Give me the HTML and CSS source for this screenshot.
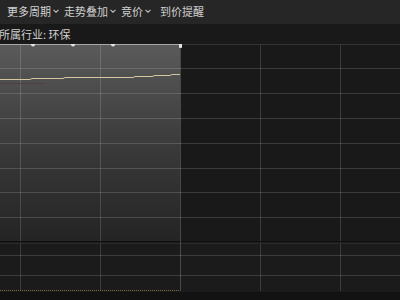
FILE: index.html
```html
<!DOCTYPE html>
<html lang="zh">
<head>
<meta charset="utf-8">
<link rel="stylesheet" href="styles.css">
</head>
<body>
<div class="page">
  <div class="toolbar">
    <span class="item">更多周期<svg class="chev" viewBox="0 0 6 4"><path d="M0.5 0.8 L3 3.2 L5.5 0.8" /></svg></span>
    <span class="item">走势叠加<svg class="chev" viewBox="0 0 6 4"><path d="M0.5 0.8 L3 3.2 L5.5 0.8" /></svg></span>
    <span class="item">竞价<svg class="chev" viewBox="0 0 6 4"><path d="M0.5 0.8 L3 3.2 L5.5 0.8" /></svg></span>
    <span class="item last">到价提醒</span>
  </div>
  <div class="industry">所属行业: 环保</div>
  <svg class="chart" viewBox="0 44 400 256" width="400" height="256">
    <defs>
      <linearGradient id="g" x1="0" y1="0" x2="0" y2="1">
        <stop offset="0" stop-color="#5a5a5a"/>
        <stop offset="0.55" stop-color="#383838"/>
        <stop offset="1" stop-color="#242424"/>
      </linearGradient>
    </defs>
    <rect x="0" y="44" width="400" height="198" fill="#191919"/>
    <rect x="0" y="242" width="400" height="50" fill="#1b1b1b"/>
    <rect x="0" y="292" width="400" height="8" fill="#121212"/>
    <rect x="0" y="45" width="180" height="197" fill="url(#g)"/>
    <g stroke="rgba(255,255,255,0.15)" stroke-width="1">
      <line x1="0" y1="68.5" x2="400" y2="68.5"/>
      <line x1="0" y1="93.5" x2="400" y2="93.5"/>
      <line x1="0" y1="118.5" x2="400" y2="118.5"/>
      <line x1="0" y1="143.5" x2="400" y2="143.5"/>
      <line x1="0" y1="168.5" x2="400" y2="168.5"/>
      <line x1="0" y1="192.5" x2="400" y2="192.5"/>
      <line x1="0" y1="217.5" x2="400" y2="217.5"/>
      <line x1="0" y1="255.5" x2="400" y2="255.5"/>
      <line x1="0" y1="275.5" x2="400" y2="275.5"/>
      <line x1="20.5" y1="44" x2="20.5" y2="291"/>
      <line x1="100.5" y1="44" x2="100.5" y2="291"/>
      <line x1="260.5" y1="44" x2="260.5" y2="291"/>
      <line x1="340.5" y1="44" x2="340.5" y2="291"/>
    </g>
    <line x1="0" y1="241.5" x2="400" y2="241.5" stroke="#0f0f0f"/>
    <line x1="0" y1="243.5" x2="400" y2="243.5" stroke="#2a2a2a"/>
    <line x1="0" y1="44.5" x2="400" y2="44.5" stroke="#333"/>
    <line x1="180.5" y1="44" x2="180.5" y2="291" stroke="rgba(255,255,255,0.2)"/>
    <line x1="0" y1="44.5" x2="180" y2="44.5" stroke="#a8a8a8"/>
    <polyline fill="none" stroke="#4a3a36" stroke-width="1" stroke-opacity="0.6" points="0,83.5 45,83.5"/>
    <polyline fill="none" stroke="#d6c6a0" stroke-width="1" points="0,79.5 30,79.5 32,78.5 63,78.5 65,77.5 133,77.5 135,76.5 152,76.5 155,75.5 170,75.5 172,74.5 180,74.5"/>
    <line x1="0" y1="290.5" x2="180" y2="290.5" stroke="#7a6a3a" stroke-dasharray="1 1"/>
    <g fill="#e4e4e4">
      <circle cx="33" cy="44.5" r="2"/>
      <circle cx="73" cy="44.5" r="2"/>
      <circle cx="113" cy="44.5" r="2"/>
      <rect x="179" y="41" width="3" height="7" rx="1"/>
    </g>
  </svg>
</div>
</body>
</html>
```
FILE: styles.css
```css
html, body {
  margin: 0;
  padding: 0;
  background: #191919;
}
.page {
  width: 400px;
  height: 300px;
  overflow: hidden;
  display: flex;
  flex-direction: column;
  font-family: "Noto Sans CJK SC", "Noto Sans", sans-serif;
  font-size: 11px;
  color: #d0d0d0;
}
.toolbar {
  height: 24px;
  background: #262626;
  display: flex;
  align-items: center;
  padding-left: 7px;
  gap: 5px;
  flex-shrink: 0;
}
.item {
  display: flex;
  align-items: center;
  gap: 2px;
  line-height: 1;
  padding-bottom: 2px;
}
.last {
  margin-left: 4px;
}
.chev {
  width: 6px;
  height: 4px;
  fill: none;
  stroke: #c0c0c0;
  stroke-width: 1.1;
}
.industry {
  height: 20px;
  background: #191919;
  display: flex;
  align-items: center;
  margin-left: -1px;
  line-height: 1;
  flex-shrink: 0;
}
.chart {
  display: block;
  flex-shrink: 0;
}
```
